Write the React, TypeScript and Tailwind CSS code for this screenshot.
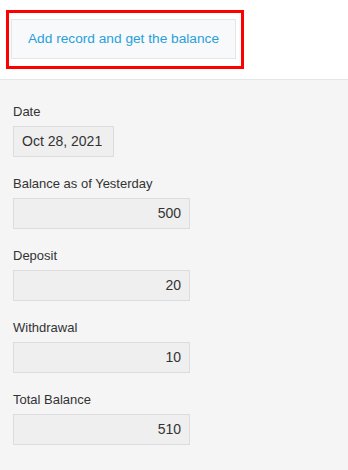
// Record form with a highlighted action button above a read-only balance summary.
const FIELDS = [
  { label: 'Balance as of Yesterday', value: '500' },
  { label: 'Deposit', value: '20' },
  { label: 'Withdrawal', value: '10' },
  { label: 'Total Balance', value: '510' },
];

export default function App() {
  return (
    <div
      className="min-h-[470px] w-[348px] bg-[#f5f5f5] text-[#333333]"
      style={{ fontFamily: '"Liberation Sans", Arial, sans-serif' }}
    >
      <div className="h-[80px] border-b border-[#e3e7e8] bg-white pl-[6px] pt-[10px]">
        <div className="inline-block border-[3px] border-[#ff0000] pb-[7px] pl-[2px] pr-[5px] pt-[6px]">
          <button className="h-[40px] w-[225px] border border-[#e3e7e8] bg-[#f7f9fa] text-[13.7px] text-[#2a9fdd]">
            Add record and get the balance
          </button>
        </div>
      </div>

      <div className="px-[13px] pt-[24px]">
        <div className="flex flex-col">
          <label className="block h-[16px] text-[13px] leading-[16px]">Date</label>
          <div className="mt-[6px] h-[31px] w-[101px] border border-[#dcdcdc] bg-[#efefef] pl-[8px] text-[14px] leading-[29px]">
            Oct 28, 2021
          </div>
        </div>

        {FIELDS.map((f) => (
          <div key={f.label} className="mt-[19px] flex flex-col">
            <label className="block h-[16px] text-[13px] leading-[16px]">{f.label}</label>
            <div className="mt-[6px] h-[31px] w-[177px] border border-[#dcdcdc] bg-[#efefef] pr-[8px] text-right text-[14px] leading-[29px]">
              {f.value}
            </div>
          </div>
        ))}
      </div>
    </div>
  );
}
